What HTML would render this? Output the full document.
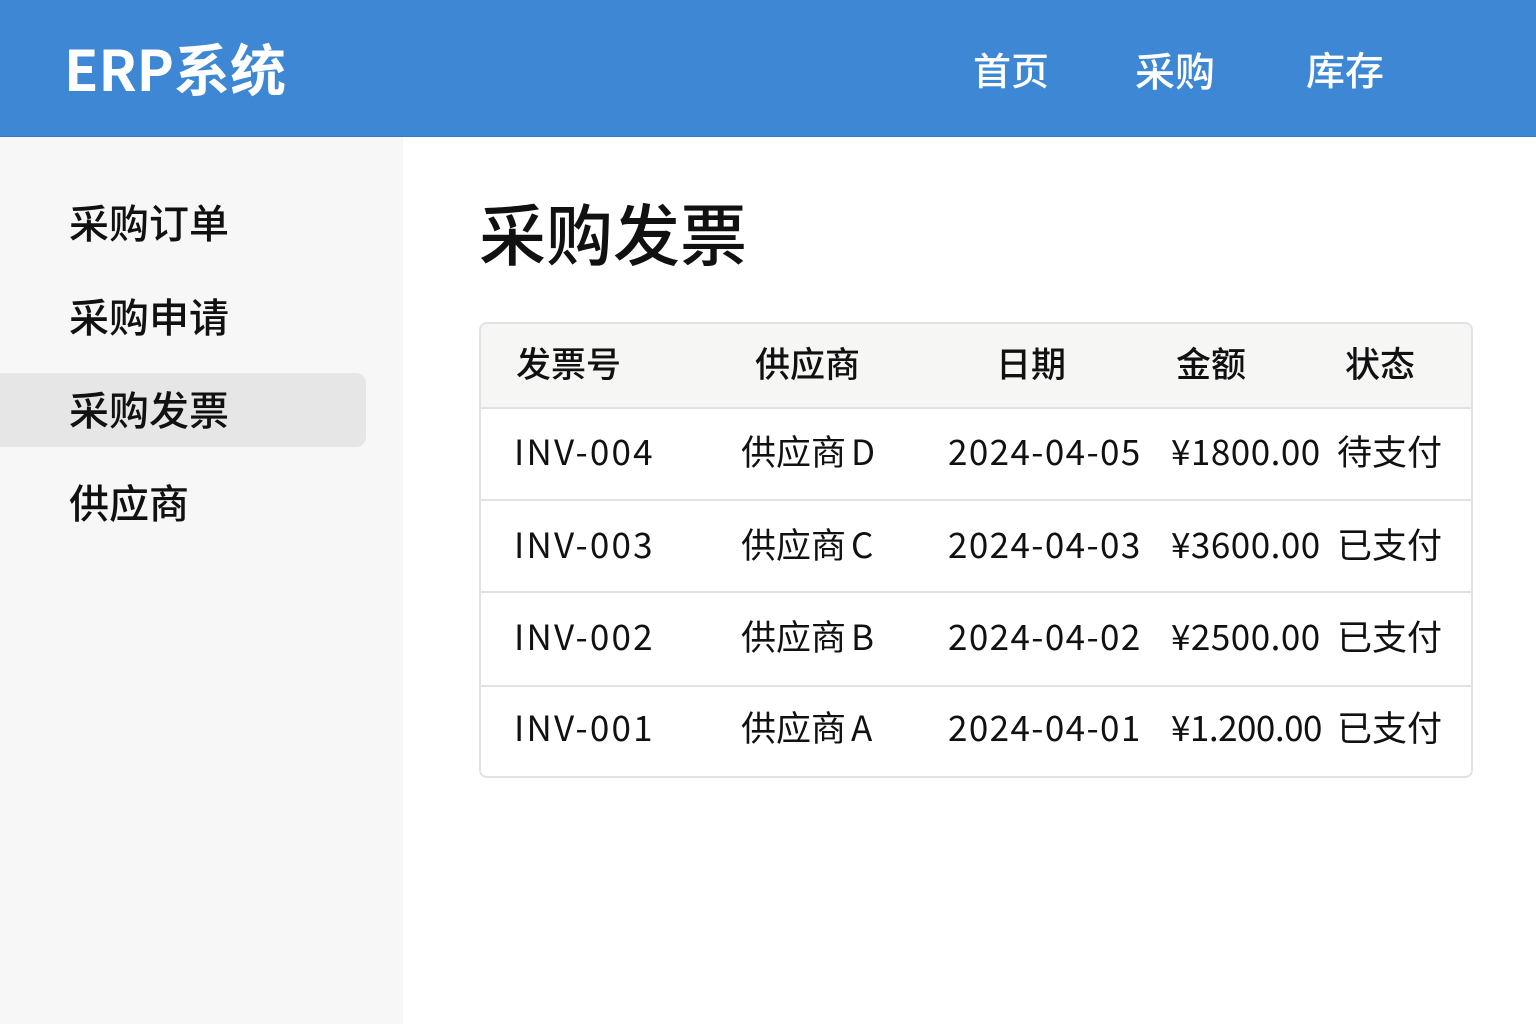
<!DOCTYPE html>
<html><head><meta charset="utf-8"><style>
*{margin:0;padding:0;box-sizing:border-box}
body{width:1536px;height:1024px;overflow:hidden;background:#fff;font-family:"Noto Sans CJK SC","Liberation Sans",sans-serif;color:#111;position:relative}
.t{position:absolute;white-space:nowrap;line-height:1}
.i{letter-spacing:2.2px}
.d{letter-spacing:1.4px}
.a{letter-spacing:0.5px}
.l{margin-left:5px}
#hd{position:absolute;left:0;top:0;width:1536px;height:137px;background:#3d87d4;border-bottom:1px solid #3579c2}
#sb{position:absolute;left:0;top:137px;width:403px;height:887px;background:#f7f7f7}
#act{position:absolute;left:0;top:373px;width:366px;height:74px;background:#e6e6e6;border-radius:0 10px 10px 0}
#tb{position:absolute;left:479px;top:322px;width:994px;height:456px;border:2px solid #e2e2e2;border-radius:8px;overflow:hidden}
#th{position:absolute;left:0;top:0;width:100%;height:85px;background:#f6f6f5;border-bottom:2px solid #e2e2e2}
.ln{position:absolute;left:0;width:100%;height:2px;background:#e2e2e2}
</style></head><body>
<div id="hd"></div>
<div class="t" style="left:64px;top:40px;font-size:56px;font-weight:700;color:#fff">ERP系统</div>
<div class="t" style="left:973px;top:50px;font-size:38px;color:#fff;font-weight:500">首页</div>
<div class="t" style="left:1135px;top:49px;font-size:40px;color:#fff;font-weight:500">采购</div>
<div class="t" style="left:1306px;top:50px;font-size:39px;color:#fff;font-weight:500">库存</div>
<div id="sb"></div>
<div id="act"></div>
<div class="t" style="left:69px;top:201px;font-size:40px;font-weight:500">采购订单</div>
<div class="t" style="left:69px;top:295px;font-size:40px;font-weight:500">采购申请</div>
<div class="t" style="left:69px;top:388px;font-size:40px;font-weight:500">采购发票</div>
<div class="t" style="left:69px;top:481px;font-size:40px;font-weight:500">供应商</div>
<div class="t" style="left:479px;top:198px;font-size:67px;font-weight:500">采购发票</div>
<div id="tb"><div id="th"></div>
<div class="ln" style="top:175px"></div>
<div class="ln" style="top:267px"></div>
<div class="ln" style="top:361px"></div>
</div>
<div class="t" style="left:516px;top:345px;font-size:35px;font-weight:500">发票号</div>
<div class="t" style="left:755px;top:345px;font-size:35px;font-weight:500">供应商</div>
<div class="t" style="left:996px;top:345px;font-size:35px;font-weight:500">日期</div>
<div class="t" style="left:1176px;top:345px;font-size:35px;font-weight:500">金额</div>
<div class="t" style="left:1345px;top:345px;font-size:35px;font-weight:500">状态</div>

<div class="t i" style="left:514px;top:433px;font-size:35px">INV-004</div>
<div class="t" style="left:741px;top:433px;font-size:35px">供应商<span class="l">D</span></div>
<div class="t d" style="left:948px;top:433px;font-size:35px">2024-04-05</div>
<div class="t a" style="left:1171px;top:433px;font-size:35px">¥1800.00</div>
<div class="t" style="left:1337px;top:433px;font-size:35px">待支付</div>

<div class="t i" style="left:514px;top:526px;font-size:35px">INV-003</div>
<div class="t" style="left:741px;top:526px;font-size:35px">供应商<span class="l">C</span></div>
<div class="t d" style="left:948px;top:526px;font-size:35px">2024-04-03</div>
<div class="t a" style="left:1171px;top:526px;font-size:35px">¥3600.00</div>
<div class="t" style="left:1337px;top:526px;font-size:35px">已支付</div>

<div class="t i" style="left:514px;top:618px;font-size:35px">INV-002</div>
<div class="t" style="left:741px;top:618px;font-size:35px">供应商<span class="l">B</span></div>
<div class="t d" style="left:948px;top:618px;font-size:35px">2024-04-02</div>
<div class="t a" style="left:1171px;top:618px;font-size:35px">¥2500.00</div>
<div class="t" style="left:1337px;top:618px;font-size:35px">已支付</div>

<div class="t i" style="left:514px;top:709px;font-size:35px">INV-001</div>
<div class="t" style="left:741px;top:709px;font-size:35px">供应商<span class="l">A</span></div>
<div class="t d" style="left:948px;top:709px;font-size:35px">2024-04-01</div>
<div class="t" style="left:1171px;top:709px;font-size:35px;letter-spacing:-0.5px">¥1.200.00</div>
<div class="t" style="left:1337px;top:709px;font-size:35px">已支付</div>
</body></html>
